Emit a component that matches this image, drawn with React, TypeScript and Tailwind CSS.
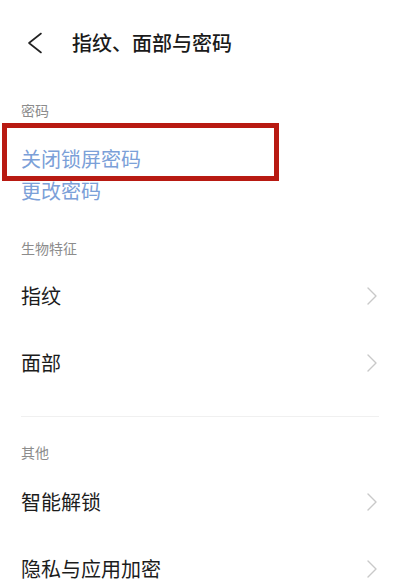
import React from "react";

const font = { fontFamily: '"Noto Sans CJK SC", "Noto Sans", sans-serif' };

function Chevron(): React.JSX.Element {
  return (
    <svg width="12" height="20" viewBox="0 0 12 20" fill="none" className="mr-[22px]">
      <path d="M2 2l8 8-8 8" stroke="#c9c9c9" strokeWidth="1.4" strokeLinecap="round" strokeLinejoin="round" />
    </svg>
  );
}

function NavRow({ label }: { label: string }): React.JSX.Element {
  return (
    <div className="flex h-[67px] items-center justify-between pl-[21px]">
      <span className="text-[20px] leading-[28px] text-[#1c1c1c]">{label}</span>
      <Chevron />
    </div>
  );
}

export default function App(): React.JSX.Element {
  return (
    <div className="relative h-[586px] w-[400px] overflow-hidden bg-white" style={font}>
      <header className="flex h-[86px] items-center">
        <svg width="18" height="22" viewBox="0 0 18 22" fill="none" className="ml-[26px]">
          <path d="M15 1.5L3 11l12 9.5" stroke="#222" strokeWidth="1.6" strokeLinecap="round" strokeLinejoin="round" />
        </svg>
        <h1 className="ml-[28px] text-[20px] font-medium leading-[28px] text-[#1a1a1a]">指纹、面部与密码</h1>
      </header>

      <p className="mt-[14px] pl-[21px] text-[14px] leading-[20px] text-[#8c8c8c]">密码</p>
      <p className="mt-[23px] pl-[21px] text-[20px] leading-[32px] text-[#7ba0d8]">关闭锁屏密码</p>
      <p className="pl-[21px] text-[20px] leading-[32px] text-[#7ba0d8]">更改密码</p>

      <p className="mt-[31px] pl-[21px] text-[14px] leading-[20px] text-[#8c8c8c]">生物特征</p>
      <div className="mt-[4px]">
        <NavRow label="指纹" />
        <NavRow label="面部" />
      </div>

      <div className="mx-[21px] mt-[20px] h-px bg-[#f0f0f0]" />

      <p className="mt-[25px] pl-[21px] text-[14px] leading-[20px] text-[#8c8c8c]">其他</p>
      <div className="mt-[6px]">
        <NavRow label="智能解锁" />
        <NavRow label="隐私与应用加密" />
      </div>

      <div className="absolute left-[2px] top-[123px] h-[58px] w-[277px] border-[5px] border-[#b81a12]" />
    </div>
  );
}
